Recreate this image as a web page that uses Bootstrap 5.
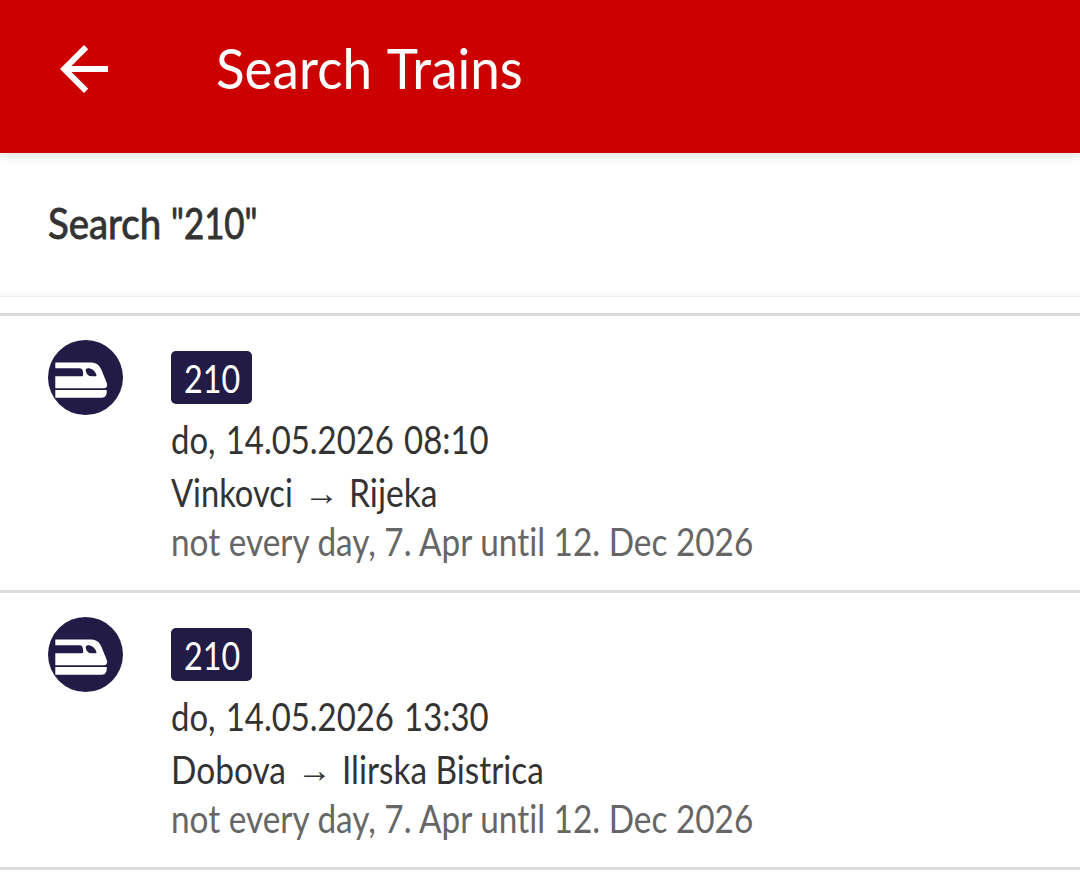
<!DOCTYPE html>
<html lang="en">
<head>
<meta charset="utf-8">
<meta name="viewport" content="width=device-width, initial-scale=1">
<title>Search Trains</title>
<link rel="stylesheet" href="https://cdn.jsdelivr.net/npm/bootstrap@5.3.0/dist/css/bootstrap.min.css">
<style>
  body { font-family: Lato, "Liberation Sans", sans-serif; font-variant-ligatures: none; color: #333; background: #fff; overflow: hidden; }
  /* condensed text: each run carries its own horizontal factor */
  .cond { display: inline-block; white-space: nowrap; transform: scaleX(var(--sx, .866)); transform-origin: 0 50%; }
  .app-bar { height: 153px; background: #c00; padding: 0 48px 15px; box-shadow: 0 1px 12px rgba(0,0,0,.16); position: relative; }
  .app-bar h1 { --sx: .93; font-size: 57px; line-height: 1.2; font-weight: 400; margin: 0 0 3px 96px; word-spacing: 3px; }
  .query { height: 144px; padding: 0 48px 2px; border-bottom: 1px solid #ebebeb; background: linear-gradient(#fff 136px, #f8f8f8); }
  .query h2 { font-size: 42px; line-height: 1.2; font-weight: 400; margin: 0; -webkit-text-stroke: .9px #333; }
  .results { margin-top: 16px; border-top: 3px solid #dcdcdc; border-radius: 0; }
  .trip { height: 277px; padding: 24px 48px 0; gap: 48px; border: 0; border-bottom: 3px solid #dcdcdc; font-size: 38px; color: #333; }
  .trip svg { flex: none; }
  .train-no { width: 81px; height: 53px; margin: 11px 0 9px; padding-left: 13px; line-height: 55px; border-radius: 5px; background: #211b46; color: #fff; --sx: .85; }
  .when { line-height: 52px; word-spacing: 2px; }
  .route { line-height: 54px; height: 54px; }
  .route .dir { font-family: "Noto Sans", sans-serif; font-size: 35px; width: 35px; text-align: center; }
  .note { line-height: 45px; color: #666; --sx: .878; }
</style>
</head>
<body>
<header class="app-bar d-flex align-items-center text-white">
  <svg width="72" height="72" viewBox="0 0 24 24" fill="#fff" aria-label="Back"><path d="M20 11H7.83l5.59-5.59L12 4l-8 8 8 8 1.41-1.41L7.83 13H20z"/></svg>
  <h1 class="cond">Search Trains</h1>
</header>
<section class="query d-flex align-items-center"><h2 class="d-flex"><span class="cond" style="--sx:.915;width:123px">Search </span><span class="cond" style="--sx:.83">"210"</span></h2></section>

<svg class="d-none">
  <symbol id="train" viewBox="0 0 75 75">
    <circle cx="37.5" cy="37.5" r="37.5" fill="#211b46"/>
    <path fill="#fff" fill-rule="evenodd" d="M7.3 22.500H42.500C48 22.500 51.300 25 53.300 29.500L58.600 42.500C60 46 58.700 48.300 55 48.300H7.300V36.300H33.500C34.800 36.300 35.300 35.500 35.200 33.500C35 30 34 28.300 31.500 28.300H7.300zM40 28.300C38.200 28.300 37.500 29.200 37.800 31C38.500 34.300 40.500 36.300 44 36.300H47.200C48.400 36.300 48.700 35.600 48.300 34.500C46.800 30.700 43.800 28.300 40 28.300z"/>
    <path fill="#fff" d="M7.300 50H58.700C59 54.500 57.800 57.700 53.500 57.700H7.300z"/>
  </symbol>
</svg>

<main class="results list-group">
  <article class="trip list-group-item d-flex align-items-start">
    <svg width="75" height="75"><use href="#train"/></svg>
    <div>
      <div class="train-no"><span class="cond">210</span></div>
      <div class="when"><span class="cond">do, 14.05.2026 08:10</span></div>
      <div class="route d-flex"><span class="cond" style="--sx:.86;width:133px">Vinkovci</span><span class="dir">→</span><span class="cond" style="--sx:.885;margin-left:10px">Rijeka</span></div>
      <div class="note"><span class="cond">not every day, 7. Apr until 12. Dec 2026</span></div>
    </div>
  </article>
  <article class="trip list-group-item d-flex align-items-start">
    <svg width="75" height="75"><use href="#train"/></svg>
    <div>
      <div class="train-no"><span class="cond">210</span></div>
      <div class="when"><span class="cond">do, 14.05.2026 13:30</span></div>
      <div class="route d-flex"><span class="cond" style="--sx:.88;width:126px">Dobova</span><span class="dir">→</span><span class="cond" style="--sx:.878;margin-left:10px">Ilirska Bistrica</span></div>
      <div class="note"><span class="cond">not every day, 7. Apr until 12. Dec 2026</span></div>
    </div>
  </article>
</main>
<script src="https://cdn.jsdelivr.net/npm/bootstrap@5.3.0/dist/js/bootstrap.bundle.min.js"></script>
</body>
</html>
